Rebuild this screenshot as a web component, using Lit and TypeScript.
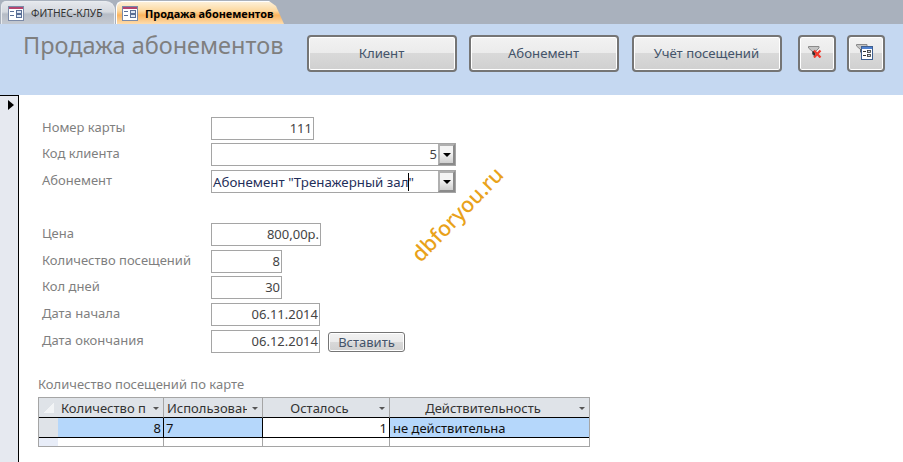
import { LitElement, html, css, svg } from "lit";
import { customElement } from "lit/decorators.js";

const formIcon = svg`<svg class="ticon" width="16" height="15" viewBox="0 0 16 15">
  <rect x="0.5" y="0.5" width="15" height="14" fill="#fff" stroke="#7b8aa8"/>
  <rect x="1" y="1" width="14" height="2" fill="#b5446e"/>
  <rect x="2" y="5" width="4" height="1" fill="#5a6f96"/><rect x="2" y="9" width="4" height="1" fill="#5a6f96"/>
  <rect x="8.5" y="4.5" width="5" height="3" fill="#dfe7f3" stroke="#5a6f96"/>
  <rect x="8.5" y="8.5" width="5" height="3" fill="#dfe7f3" stroke="#5a6f96"/>
</svg>`;

const funnel = svg`<path d="M0.5 0.5H11V2L7.5 5.5V11L4.5 8V5.5L0.5 2Z" fill="#c4c4c4" stroke="#8a8a8a"/><path d="M4.5 5H7V10.5L4.5 8Z" fill="#2e2e2e"/>`;

const arrow = html`<span class="drop"><i></i></span>`;
const sort = html`<i class="sort"></i>`;

@customElement("app-root")
export class AppRoot extends LitElement {
  static styles = css`
    :host { display: block; width: 903px; height: 462px; overflow: hidden; background: #fff; position: relative;
      font-family: "Noto Sans", "DejaVu Sans", sans-serif; font-size: 13px; color: #444; }
    * { box-sizing: border-box; }
    .tabs { height: 24px; background: #a9b1bd; display: flex; align-items: flex-end; padding-left: 1px; gap: 1px; }
    .tab { height: 23px; display: flex; align-items: center; position: relative; white-space: nowrap; }
    .tab .ticon { margin-left: 6px; margin-right: 7px; flex: none; }
    .t1 { width: 114px; background: linear-gradient(#e4e7ec 0%, #d5d9df 45%, #b6bcc6 55%, #c4c9d1 100%);
      border-radius: 5px 9px 0 0; border: 1px solid #e8ebef; border-bottom: 0; color: #333; font-size: 10.3px; }
    .t2 { width: 168px; background: linear-gradient(#fdf0d8 0%, #fdd9a0 40%, #fbb45e 60%, #fddcae 100%);
      border-radius: 6px 0 0 0; border-left: 1px solid #fff; border-top: 1px solid #fff; color: #000; font-weight: 700; font-size: 10.9px;
      clip-path: polygon(0 0, 153px 0, 160px 5px, 168px 23px, 0 23px); }
    .t2 .ticon { margin-left: 5px; }

    .head { height: 71px; background: #c5d8f1; display: flex; align-items: flex-start; padding: 11px 0 0 23px; }
    .title { width: 284px; font-size: 23.5px; line-height: 24px; margin-top: -2px; margin-bottom: 2px; color: #7f7f7f; white-space: nowrap; }
    .btn { height: 37px; border: 2px solid #757575; border-radius: 4px; box-shadow: inset 0 0 0 1px #fff;
      background: linear-gradient(#f2f2f2 0%, #ebebeb 49%, #d9d9d9 50%, #d0d0d0 100%);
      display: flex; align-items: center; justify-content: center; color: #44546a; font-size: 13.2px; flex: none; padding: 0 1px 2px 0; }
    .wide { width: 150px; margin-right: 12px; }
    .wide.mid { margin-right: 13px; }
    .wide.last { margin-right: 16px; }
    .icon { width: 38px; margin-right: 11px; padding: 0 4px 3px 0; }

    .main { display: flex; height: 367px; }
    .sel { width: 19px; background: #e6e9f0; border-right: 1px solid #000; border-top: 1px solid #000; flex: none; padding: 4px 0 0 8px; }
    .sel i { display: block; width: 0; height: 0; border-left: 6px solid #000; border-top: 5px solid transparent; border-bottom: 5px solid transparent; }

    .body { flex: 1; position: relative; }
    .form { padding: 22px 0 0 23px; display: flex; flex-direction: column; }
    .row { display: flex; height: 23px; align-items: flex-start; flex: none; }
    .g3 { margin-top: 3px; }
    .g4 { margin-top: 4px; }
    .g30 { margin-top: 30px; }
    .lbl { width: 169px; flex: none; color: #7f7f7f; font-size: 13px; line-height: 18px; padding-top: 1px; white-space: nowrap; }
    .field { height: 23px; border: 1px solid #a5a5a5; background: #fff; color: #444; display: flex; align-items: center; justify-content: flex-end;
      padding: 0 1px 2px; white-space: nowrap; position: relative; font-size: 13px; }
    .w103 { width: 103px; } .w245 { width: 245px; } .w110 { width: 110px; } .w71 { width: 71px; } .w109 { width: 109px; }
    .combo { padding-right: 18px; }
    .left { justify-content: flex-start; color: #1f2f5a; padding-bottom: 0; font-size: 13.3px; }
    .caret { display: inline-block; width: 1px; height: 18px; background: #000; margin: 0 -1px 0 0; }
    .drop { position: absolute; right: 0; top: 0; width: 17px; height: 21px; border: 2px solid #8a8a8a; border-top-color: #b0b0b0; border-left-color: #b0b0b0;
      background: linear-gradient(#f4f4f4 40%, #cfcfcf); display: flex; align-items: center; justify-content: center; }
    .drop i { width: 0; height: 0; border-left: 4px solid transparent; border-right: 4px solid transparent; border-top: 4px solid #000; }
    .ins { margin-left: 8px; margin-top: 2px; width: 77px; height: 20px; border: 1px solid #757575; border-radius: 3px; box-shadow: inset 0 0 0 1px #fff;
      background: linear-gradient(#f2f2f2 0%, #ebebeb 49%, #d9d9d9 50%, #d0d0d0 100%); color: #44546a; font-size: 13px;
      display: flex; align-items: center; justify-content: center; }

    .sub { margin: 22px 0 0 19px; }
    .subt { color: #7f7f7f; font-size: 13px; line-height: 18px; height: 22px; }
    .grid { width: 552px; display: grid; grid-template-columns: 19px 106px 99px 127px 199px; grid-template-rows: 20px 20px 8px; border: 1px solid #a5a5a5; font-size: 13px; color: #222; }
    .grid > div { display: flex; align-items: center; white-space: nowrap; overflow: hidden; position: relative; }
    .h { background: #dfe3e8; border-right: 1px solid #a5a5a5; border-bottom: 1px solid #000; padding: 0 15px 0 3px; color: #333; }
    .h span { overflow: hidden; min-width: 0; }
    .h.c { justify-content: center; }
    .h.l { padding-right: 16px; }
    .h.x { border-right: 0; }
    .sort { position: absolute; right: 4px; top: 9px; width: 0; height: 0; border-left: 3px solid transparent; border-right: 3px solid transparent; border-top: 3px solid #555; }
    .corner { background: #dfe3e8; border-right: 0 !important; }
    .corner::after { content: ""; position: absolute; left: 5px; top: 5px; width: 10px; height: 10px; background: linear-gradient(135deg, transparent 50%, #f2f4f6 50%); }
    .rs { background: #dfe3e8; border-bottom: 1px solid #000; }
    .d { background: #b5d7fb; border-right: 1px solid #000; border-bottom: 1px solid #000; padding: 1px 2px 0; color: #111; }
    .d.r { justify-content: flex-end; }
    .d.w { background: #fff; }
    .d.e { border-right: 0; padding-left: 3px; }
    .n { border-right: 1px solid #a5a5a5; background: #fff; }
    .n.x { border-right: 0; }
    .ns { background: #e8edf8; border-right: 0 !important; }
    .mark { position: absolute; left: 365px; top: 104px; width: 146px; text-align: center; color: #e9a21a; font-size: 21.2px; font-weight: 500; line-height: 30px;
      font-family: "Noto Sans", sans-serif; transform: rotate(-46deg); pointer-events: none; white-space: nowrap; }
  `;

  render() {
    return html`
      <div class="tabs">
        <div class="tab t1">${formIcon}<span>ФИТНЕС-КЛУБ</span></div>
        <div class="tab t2">${formIcon}<span>Продажа абонементов</span></div>
      </div>
      <div class="head">
        <div class="title">Продажа абонементов</div>
        <div class="btn wide">Клиент</div>
        <div class="btn wide mid">Абонемент</div>
        <div class="btn wide last">Учёт посещений</div>
        <div class="btn icon">
          <svg width="14" height="12" viewBox="0 0 14 12">${funnel}
            <path d="M6 4.5L12.5 11.5M12.5 4.5L6 11.5" stroke="#f0392b" stroke-width="2.2"/></svg>
        </div>
        <div class="btn icon">
          <svg width="17" height="16" viewBox="0 0 17 16">${funnel}
            <rect x="5.5" y="2.5" width="11" height="13" fill="#fff" stroke="#3f5f8f"/>
            <rect x="6" y="3" width="10" height="2" fill="#4f81d0"/>
            <rect x="7" y="7" width="3" height="1" fill="#333"/><rect x="7" y="11" width="3" height="1" fill="#333"/>
            <rect x="11.5" y="6.5" width="3" height="2" fill="#cdd8e8" stroke="#333" stroke-width=".8"/>
            <rect x="11.5" y="10.5" width="3" height="2" fill="#cdd8e8" stroke="#333" stroke-width=".8"/>
          </svg>
        </div>
      </div>
      <div class="main">
        <div class="sel"><i></i></div>
        <div class="body">
          <div class="form">
            <div class="row"><div class="lbl">Номер карты</div><div class="field w103">111</div></div>
            <div class="row g3"><div class="lbl">Код клиента</div><div class="field w245 combo">5${arrow}</div></div>
            <div class="row g4"><div class="lbl">Абонемент</div><div class="field w245 combo left">Абонемент "Тренажерный зал<span class="caret"></span>"${arrow}</div></div>
            <div class="row g30"><div class="lbl">Цена</div><div class="field w110">800,00р.</div></div>
            <div class="row g4"><div class="lbl">Количество посещений</div><div class="field w71">8</div></div>
            <div class="row g3"><div class="lbl">Кол дней</div><div class="field w71">30</div></div>
            <div class="row g4"><div class="lbl">Дата начала</div><div class="field w109">06.11.2014</div></div>
            <div class="row g4"><div class="lbl">Дата окончания</div><div class="field w109">06.12.2014</div><div class="ins">Вставить</div></div>
          </div>
          <div class="sub">
            <div class="subt">Количество посещений по карте</div>
            <div class="grid">
              <div class="h corner"></div>
              <div class="h"><span>Количество п</span>${sort}</div>
              <div class="h"><span>Использован</span>${sort}</div>
              <div class="h c l">Осталось${sort}</div>
              <div class="h c l x">Действительность${sort}</div>
              <div class="rs"></div>
              <div class="d r">8</div>
              <div class="d">7</div>
              <div class="d r w">1</div>
              <div class="d e">не действительна</div>
              <div class="ns"></div>
              <div class="n"></div><div class="n"></div><div class="n"></div><div class="n x"></div>
            </div>
          </div>
          <div class="mark">dbforyou.ru</div>
        </div>
      </div>
    `;
  }
}
